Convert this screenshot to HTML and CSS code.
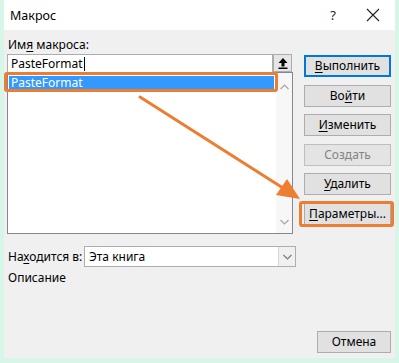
FILE: index.html
```html
<!DOCTYPE html>
<html lang="ru">
<head>
    <meta charset="UTF-8">
    <meta name="viewport" content="width=device-width, initial-scale=1.0">
    <title>Макрос</title>
    <link rel="stylesheet" href="styles.css">
</head>
<body>
    <div class="window">
        <div class="titlebar">
            <span class="title">Макрос</span>
            <span class="help">?</span>
            <span class="close">
                <svg width="14" height="14" viewBox="0 0 14 14"><path d="M1 1L13 13M13 1L1 13" stroke="#222" stroke-width="1.1" fill="none"/></svg>
            </span>
        </div>

        <div class="content">
            <div class="main">
                <div class="left">
                    <div class="label">Им<u>я</u> макроса:</div>
                    <div class="name-row">
                        <div class="name-input">PasteFormat<span class="caret"></span></div>
                        <div class="up-btn">
                            <svg width="10" height="11" viewBox="0 0 10 11"><path d="M5 0L9.5 5H6.5V8.5H3.5V5H0.5Z" fill="#000"/><rect x="0.5" y="9.5" width="9" height="1.5" fill="#000"/></svg>
                        </div>
                    </div>
                    <div class="list">
                        <div class="items">
                            <div class="item selected">PasteFormat</div>
                        </div>
                        <div class="scrollbar">
                            <svg width="9" height="6" viewBox="0 0 9 6"><path d="M0.5 5L4.5 1L8.5 5" stroke="#a6a6a6" stroke-width="1.2" fill="none"/></svg>
                            <svg width="9" height="6" viewBox="0 0 9 6"><path d="M0.5 1L4.5 5L8.5 1" stroke="#a6a6a6" stroke-width="1.2" fill="none"/></svg>
                        </div>
                    </div>
                </div>

                <div class="buttons">
                    <div class="btn default"><u>В</u>ыполнить</div>
                    <div class="btn">Во<u>й</u>ти</div>
                    <div class="btn"><u>И</u>зменить</div>
                    <div class="btn disabled">Создать</div>
                    <div class="btn"><u>У</u>далить</div>
                    <div class="btn"><u>П</u>араметры...</div>
                </div>
            </div>

            <div class="place-row">
                <span class="place-label">На<u>х</u>одится в:</span>
                <div class="combo">
                    <span class="combo-text">Эта книга</span>
                    <span class="combo-btn">
                        <svg width="9" height="6" viewBox="0 0 9 6"><path d="M0.5 1L4.5 5L8.5 1" stroke="#7a7a7a" stroke-width="1.2" fill="none"/></svg>
                    </span>
                </div>
            </div>
            <div class="desc-label">Описание</div>

            <div class="footer">
                <div class="btn cancel">Отмена</div>
            </div>
        </div>
    </div>

    <!-- annotation overlay -->
    <div class="mark mark-item"></div>
    <div class="mark mark-params"></div>
    <svg class="arrow" width="399" height="363" viewBox="0 0 399 363">
        <line x1="140" y1="97" x2="283" y2="188" stroke="#ed7d31" stroke-width="3" stroke-linecap="round"/>
        <path d="M300 199L276 195L287 179Z" fill="#ed7d31"/>
    </svg>
</body>
</html>
```

FILE: styles.css
```css
body { margin: 0; background: #d8f6e8; font-family: "Noto Sans", "Open Sans", sans-serif; font-size: 12px; color: #000; }
u { text-decoration-thickness: 1px; text-underline-offset: 2px; }

.window { margin: 0 4px; height: 358px; background: #f0f0f0; display: flex; flex-direction: column; }

.titlebar { height: 30px; background: #fff; display: flex; align-items: center; padding-left: 6px; }
.title { flex: 1; font-size: 12.5px; }
.help { width: 20px; text-align: center; margin-right: 23px; font-size: 13px; color: #222; }
.close { width: 14px; margin-right: 15px; display: flex; }

.content { flex: 1; display: flex; flex-direction: column; padding: 7px 4px 5px 3px; }
.main { display: flex; gap: 11px; }

.left { width: 286px; display: flex; flex-direction: column; }
.label { height: 17px; line-height: 15px; padding-left: 1px; }

.name-row { display: flex; height: 18px; }
.name-input { flex: 1; background: #fff; border: 1px solid #abadb3; border-bottom: none; padding-left: 3px; line-height: 17px; display: flex; align-items: center; }
.caret { width: 1px; height: 14px; background: #000; margin-left: 1px; }
.up-btn { width: 17px; background: #e6e6e6; border: 1px solid #adadad; display: flex; align-items: center; justify-content: center; margin-right: 1px; }

.list { height: 160px; background: #fff; border: 1px solid #828790; display: flex; }
.items { flex: 1; padding: 3px 2px 0 1px; }
.item { height: 13px; line-height: 13px; padding-left: 2px; }
.item.selected { background: #3399ff; color: #fff; }
.scrollbar { width: 16px; background: #f7f7f7; display: flex; flex-direction: column; justify-content: space-between; align-items: center; padding: 11px 0 8px; }

.buttons { width: 87px; display: flex; flex-direction: column; gap: 7.5px; padding-top: 18px; }
.btn { height: 20px; line-height: 20px; text-align: center; background: #e1e1e1; border: 1px solid #adadad; }
.btn.default { border: 2px solid #0078d7; height: 18px; line-height: 18px; }
.btn.disabled { color: #838383; background: #e4e4e4; border-color: #bfbfbf; }

.place-row { display: flex; align-items: center; margin-top: 12px; height: 21px; }
.place-label { width: 76px; padding-left: 1px; }
.combo { width: 210px; height: 19px; background: #fff; border: 1px solid #abadb3; display: flex; align-items: center; }
.combo-text { flex: 1; padding-left: 4px; }
.combo-btn { width: 16px; height: 19px; background: #f0f0f0; border-left: 1px solid #d9d9d9; display: flex; align-items: center; justify-content: center; }

.desc-label { margin-top: 3px; padding-left: 1px; line-height: 16px; }

.footer { margin-top: auto; display: flex; justify-content: flex-end; }
.btn.cancel { width: 72px; }

.mark { position: absolute; border: 3px solid #ed7d31; border-radius: 3px; }
.mark-item { left: 4px; top: 72px; width: 268px; height: 14px; }
.mark-params { left: 299px; top: 201px; width: 89px; height: 20px; }
.arrow { position: absolute; left: 0; top: 0; pointer-events: none; }
```
